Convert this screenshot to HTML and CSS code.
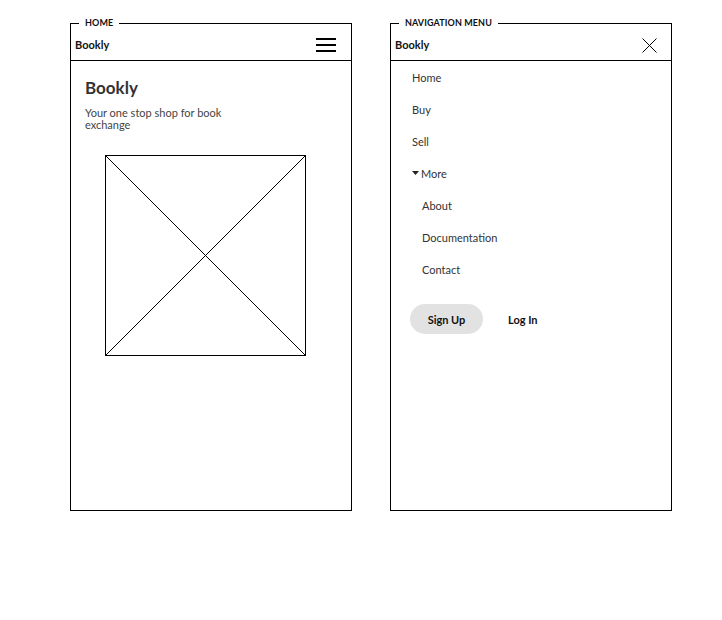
FILE: index.html
```html
<!DOCTYPE html>
<html>
<head>
<meta charset="utf-8">
<link rel="stylesheet" href="styles.css">
</head>
<body>
<div class="page">
  <section class="frame">
    <div class="legend">HOME</div>
    <header class="bar">
      <span class="brand">Bookly</span>
      <svg class="hamburger" width="20" height="14" viewBox="0 0 20 14"><rect x="0" y="0" width="20" height="2"/><rect x="0" y="6" width="20" height="2"/><rect x="0" y="12" width="20" height="2"/></svg>
    </header>
    <div class="home">
      <h1 class="title">Bookly</h1>
      <p class="lead">Your one stop shop for book exchange</p>
      <svg class="placeholder" width="201" height="201" viewBox="0 0 201 201">
        <rect x="0.5" y="0.5" width="200" height="200" fill="none" stroke="#000" stroke-width="1"/>
        <line x1="0.5" y1="0.5" x2="200.5" y2="200.5" stroke="#000" stroke-width="1"/>
        <line x1="200.5" y1="0.5" x2="0.5" y2="200.5" stroke="#000" stroke-width="1"/>
      </svg>
    </div>
  </section>
  <section class="frame">
    <div class="legend">NAVIGATION MENU</div>
    <header class="bar">
      <span class="brand">Bookly</span>
      <svg class="close" width="15" height="15" viewBox="0 0 15 15"><line x1="0.5" y1="0.5" x2="14.5" y2="14.5" stroke="#000" stroke-width="1"/><line x1="14.5" y1="0.5" x2="0.5" y2="14.5" stroke="#000" stroke-width="1"/></svg>
    </header>
    <nav class="menu">
      <a class="item">Home</a>
      <a class="item">Buy</a>
      <a class="item">Sell</a>
      <a class="item"><svg class="caret" width="7" height="4" viewBox="0 0 7 4"><polygon points="0,0 7,0 3.5,4"/></svg>More</a>
      <a class="item sub">About</a>
      <a class="item sub">Documentation</a>
      <a class="item sub">Contact</a>
      <div class="actions">
        <span class="btn primary">Sign Up</span>
        <span class="btn">Log In</span>
      </div>
    </nav>
  </section>
</div>
</body>
</html>
```
FILE: styles.css
```css
* { box-sizing: border-box; }
html, body { margin: 0; padding: 0; background: #fff; }
body { font-family: "Lato", "Liberation Sans", sans-serif; color: #333; }
.page {
  display: flex;
  gap: 38px;
  padding: 23px 0 0 70px;
}
.frame {
  position: relative;
  width: 282px;
  height: 488px;
  border: 1px solid #000;
}
.legend {
  position: absolute;
  top: -7px;
  left: 8px;
  padding: 0 6px;
  background: #fff;
  font-size: 9px;
  font-weight: 700;
  line-height: 12px;
  color: #111;
  letter-spacing: 0.1px;
}
.bar {
  height: 37px;
  border-bottom: 1px solid #000;
  display: flex;
  align-items: center;
  justify-content: space-between;
  padding: 0 15px 0 4px;
}
.brand { font-size: 11px; font-weight: 700; color: #111; margin-top: 5px; }
.hamburger { fill: #000; display: block; margin-top: 5px; }
.close { display: block; margin-right: -1px; margin-top: 7px; }
.home { padding: 17px 14px 0 14px; }
.title { margin: 0; font-size: 17px; font-weight: 700; line-height: 20px; color: #333; }
.lead { margin: 9px 0 0; width: 150px; font-size: 11px; line-height: 12px; color: #444; }
.placeholder { display: block; margin: 24px 0 0 20px; }
.menu { display: flex; flex-direction: column; padding: 0 0 0 21px; }
.item {
  display: flex;
  align-items: center;
  height: 32px;
  font-size: 11px;
  color: #333;
}
.item.sub { padding-left: 10px; }
.caret { fill: #222; margin-right: 2px; margin-left: 0; }
.actions { display: flex; align-items: center; gap: 25px; margin: 19px 0 0 -2px; }
.btn { font-size: 11px; font-weight: 700; color: #111; }
.btn.primary {
  background: #e2e2e2;
  border-radius: 15px;
  height: 30px;
  width: 73px;
  display: flex;
  align-items: center;
  justify-content: center;
}
```
